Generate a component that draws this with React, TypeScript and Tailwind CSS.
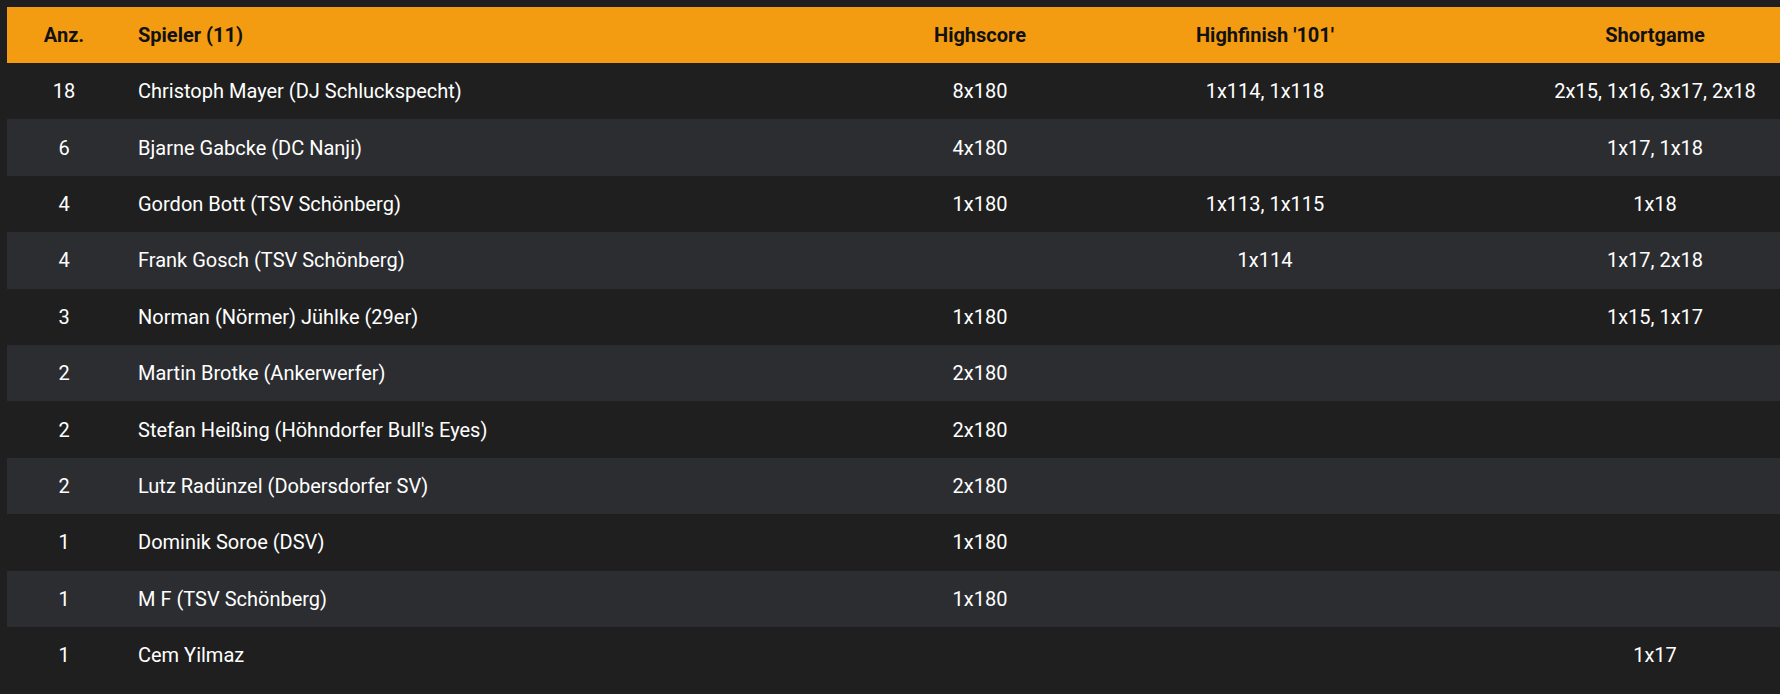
const rows = [
  { anz: "18", name: "Christoph Mayer (DJ Schluckspecht)", hs: "8x180", hf: "1x114, 1x118", sg: "2x15, 1x16, 3x17, 2x18" },
  { anz: "6", name: "Bjarne Gabcke (DC Nanji)", hs: "4x180", hf: "", sg: "1x17, 1x18" },
  { anz: "4", name: "Gordon Bott (TSV Schönberg)", hs: "1x180", hf: "1x113, 1x115", sg: "1x18" },
  { anz: "4", name: "Frank Gosch (TSV Schönberg)", hs: "", hf: "1x114", sg: "1x17, 2x18" },
  { anz: "3", name: "Norman (Nörmer) Jühlke (29er)", hs: "1x180", hf: "", sg: "1x15, 1x17" },
  { anz: "2", name: "Martin Brotke (Ankerwerfer)", hs: "2x180", hf: "", sg: "" },
  { anz: "2", name: "Stefan Heißing (Höhndorfer Bull's Eyes)", hs: "2x180", hf: "", sg: "" },
  { anz: "2", name: "Lutz Radünzel (Dobersdorfer SV)", hs: "2x180", hf: "", sg: "" },
  { anz: "1", name: "Dominik Soroe (DSV)", hs: "1x180", hf: "", sg: "" },
  { anz: "1", name: "M F (TSV Schönberg)", hs: "1x180", hf: "", sg: "" },
  { anz: "1", name: "Cem Yilmaz", hs: "", hf: "", sg: "1x17" },
];

export default function App() {
  return (
    <div className="h-[694px] w-full overflow-hidden bg-[#1f1f1f] pl-[7px] pt-[7px] font-['Roboto',sans-serif]">
      <table className="w-[1853px] table-fixed border-collapse text-[20px]">
        <colgroup>
          <col className="w-[114px]" />
          <col className="w-[759px]" />
          <col className="w-[200px]" />
          <col className="w-[370px]" />
          <col className="w-[410px]" />
        </colgroup>
        <thead>
          <tr className="h-[56px] bg-[#f39c12] text-[#111] font-bold">
            <th className="text-center">Anz.</th>
            <th className="pl-[17px] text-left">Spieler (11)</th>
            <th className="text-center">Highscore</th>
            <th className="text-center">Highfinish '101'</th>
            <th className="text-center">Shortgame</th>
          </tr>
        </thead>
        <tbody className="text-white">
          {rows.map((r, i) => (
            <tr key={i} className={`h-[56.4px] ${i % 2 === 1 ? "bg-[#2c2d31]" : "bg-[#1f1f1f]"}`}>
              <td className="text-center">{r.anz}</td>
              <td className="pl-[17px]">{r.name}</td>
              <td className="text-center">{r.hs}</td>
              <td className="text-center">{r.hf}</td>
              <td className="text-center">{r.sg}</td>
            </tr>
          ))}
        </tbody>
      </table>
    </div>
  );
}
